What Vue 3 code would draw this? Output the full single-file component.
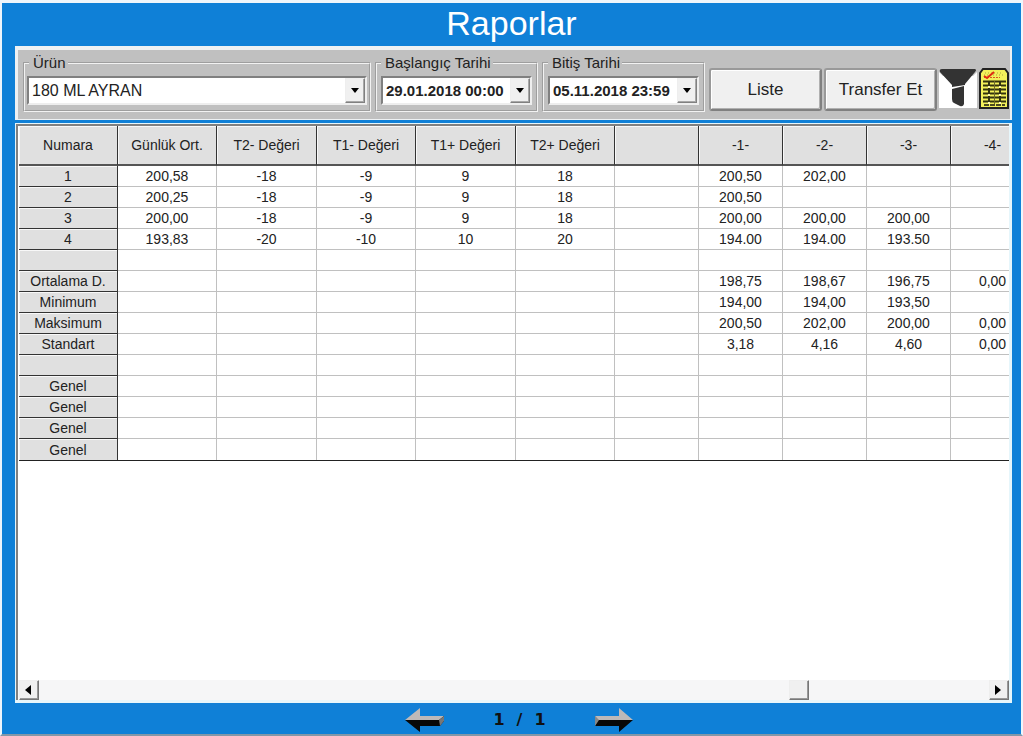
<script setup>
import { ref } from 'vue'

const product = ref('180 ML AYRAN')
const startDate = ref('29.01.2018 00:00')
const endDate = ref('05.11.2018 23:59')
const scroll = ref(751)

const columns = [
  'Numara', 'Günlük Ort.', 'T2- Değeri', 'T1- Değeri', 'T1+ Değeri', 'T2+ Değeri',
  '', '-1-', '-2-', '-3-', '-4-',
]

const rows = [
  ['1', '200,58', '-18', '-9', '9', '18', '', '200,50', '202,00', '', ''],
  ['2', '200,25', '-18', '-9', '9', '18', '', '200,50', '', '', ''],
  ['3', '200,00', '-18', '-9', '9', '18', '', '200,00', '200,00', '200,00', ''],
  ['4', '193,83', '-20', '-10', '10', '20', '', '194.00', '194.00', '193.50', ''],
  ['', '', '', '', '', '', '', '', '', '', ''],
  ['Ortalama D.', '', '', '', '', '', '', '198,75', '198,67', '196,75', '0,00'],
  ['Minimum', '', '', '', '', '', '', '194,00', '194,00', '193,50', ''],
  ['Maksimum', '', '', '', '', '', '', '200,50', '202,00', '200,00', '0,00'],
  ['Standart', '', '', '', '', '', '', '3,18', '4,16', '4,60', '0,00'],
  ['', '', '', '', '', '', '', '', '', '', ''],
  ['Genel', '', '', '', '', '', '', '', '', '', ''],
  ['Genel', '', '', '', '', '', '', '', '', '', ''],
  ['Genel', '', '', '', '', '', '', '', '', '', ''],
  ['Genel', '', '', '', '', '', '', '', '', '', ''],
]
</script>

<template>
  <main class="window">
    <h1 class="title">Raporlar</h1>

    <form class="toolbar" @submit.prevent>
      <fieldset class="group group-product">
        <legend><label for="product">Ürün</label></legend>
        <div class="combo combo-product">
          <select id="product" v-model="product">
            <option>180 ML AYRAN</option>
          </select>
          <span class="drop"></span>
        </div>
      </fieldset>
      <fieldset class="group group-date">
        <legend><label for="start">Başlangıç Tarihi</label></legend>
        <div class="combo combo-date">
          <select id="start" v-model="startDate">
            <option>29.01.2018 00:00</option>
          </select>
          <span class="drop"></span>
        </div>
      </fieldset>
      <fieldset class="group group-date">
        <legend><label for="end">Bitiş Tarihi</label></legend>
        <div class="combo combo-date">
          <select id="end" v-model="endDate">
            <option>05.11.2018 23:59</option>
          </select>
          <span class="drop"></span>
        </div>
      </fieldset>
      <div class="actions">
        <button type="button" class="push">Liste</button>
        <button type="button" class="push">Transfer Et</button>
        <button type="button" class="icon" aria-label="Filtre">
          <svg viewBox="0 0 38 40" width="38" height="40">
            <rect width="38" height="40" fill="#fff" />
            <path d="M0 0H38V4L34 8H4L0 4Z" fill="#c0c0c0" />
            <path d="M3 1H36Q38 2 36 4L26 16V17L13 19V17L1 4Q0 1 3 1Z" fill="#333" />
            <path d="M13 21 25 18V36Q24 39 21 38L15 35Q13 34 13 31Z" fill="#333" />
          </svg>
        </button>
        <button type="button" class="icon" aria-label="Tablo">
          <svg viewBox="0 0 30 41" width="30" height="41">
            <path d="M1 5 4 1H26L29 5V40H1Z" fill="#f3f05a" stroke="#222" stroke-width="2" />
            <path d="M6 5H24M5 7H25" stroke="#a8a440" stroke-dasharray="1 2" />
            <path d="M5 9.500H21" stroke="#d65a20" stroke-dasharray="2 1" />
            <path d="M5 8 8 10 15 4" fill="none" stroke="#e02b12" stroke-width="2" />
            <path d="M4 13.500H27M4 17.500H27M4 21.500H27M4 25.500H27M4 29.500H27M4 33.500H27" stroke="#33330f" stroke-width="2" />
            <path d="M5 37H26" stroke="#4b4920" stroke-width="2" stroke-dasharray="5 1" />
            <path d="M10 13V36M21 13V36" stroke="#33330f" stroke-width="2" />
            <path d="M15.500 13V36" stroke="#6d6a2c" />
            <path d="M10 18V36M21 18V36" stroke="#fff9b0" stroke-width="2" stroke-dasharray="2 6" />
          </svg>
        </button>
      </div>
    </form>

    <section class="panel">
      <div class="sheet">
        <table>
          <colgroup>
            <col v-for="(c, i) in columns" :key="i" :class="i < 6 ? (i === 2 || i === 4 ? 'col-l' : 'col-m') : 'col-s'" />
          </colgroup>
          <thead>
            <tr>
              <th v-for="(c, i) in columns" :key="i" scope="col">{{ c }}</th>
            </tr>
          </thead>
          <tbody>
            <tr v-for="(row, r) in rows" :key="r">
              <template v-for="(cell, i) in row" :key="i">
                <th v-if="i === 0" scope="row">{{ cell }}</th>
                <td v-else>{{ cell }}</td>
              </template>
            </tr>
          </tbody>
        </table>
      </div>
      <div class="scrollbar">
        <button type="button" class="step" aria-label="Sola kaydır">
          <svg viewBox="0 0 6 10" width="6" height="10"><path d="M6 0V10L0 5Z" /></svg>
        </button>
        <input v-model="scroll" type="range" min="0" max="931" aria-label="Yatay kaydırma" />
        <button type="button" class="step" aria-label="Sağa kaydır">
          <svg viewBox="0 0 6 10" width="6" height="10"><path d="M0 0V10L6 5Z" /></svg>
        </button>
      </div>
    </section>

    <nav class="pager">
      <button type="button" class="arrow" aria-label="Önceki sayfa">
        <svg viewBox="0 0 40 24" width="40" height="24">
          <path d="M0 12 15 0V8H39V12Z" fill="#bdb9b8" />
          <path d="M0 12H34L39 8V13L35 18H15V24Z" fill="#080808" />
          <path d="M34 12 39 8V13L35 18Z" fill="#777" />
        </svg>
      </button>
      <p class="pages"><span>1</span><span>/</span><span>1</span></p>
      <button type="button" class="arrow" aria-label="Sonraki sayfa">
        <svg viewBox="0 0 40 24" width="40" height="24">
          <path d="M1 8H25V0L39 12H4Z" fill="#bdb9b8" />
          <path d="M4 12H39L25 24V18H1Z" fill="#080808" />
          <path d="M1 8 5 12 1 18Z" fill="#888" />
        </svg>
      </button>
    </nav>
  </main>
</template>

<style>
body {
  margin: 0;
  background: #f4f8fb;
}
</style>

<style scoped>
* {
  box-sizing: border-box;
}

.window {
  display: flex;
  flex-direction: column;
  min-height: 100vh;
  padding: 0 9px 0 13px;
  border: solid #eef5fb;
  border-width: 3px 2px 0 2px;
  border-bottom: 2px solid #8297a8;
  background: #0f80d7;
  color: #222;
  font-family: "Liberation Sans", Arial, sans-serif;
}

button,
select {
  font-family: inherit;
  color: inherit;
}

.title {
  margin: 0;
  height: 43px;
  padding-right: 4px;
  color: #fff;
  font-size: 34px;
  font-weight: 400;
  line-height: 40px;
  text-align: center;
}

.toolbar {
  display: flex;
  gap: 4px;
  height: 74px;
  padding: 4px 1px 5px 5px;
  border: solid #eef1f3;
  border-width: 4px 2px 1px 3px;
  background: #c0c0c0;
}

.group {
  min-width: 0;
  height: 58px;
  margin: 0;
  padding: 0 4px;
  border: 2px groove #f2f2f2;
}

.group-product {
  flex: 1 1 0;
}

.group-date {
  flex: none;
  width: 163px;
}

.group legend {
  padding: 0 2px 0 4px;
  font-size: 15px;
  line-height: 18px;
}

.combo {
  position: relative;
  height: 29px;
  margin-top: 4px;
  border: 2px solid;
  border-color: #808080 #eee #eee #808080;
  background: #fff;
}

.combo-product {
  margin: 4px -2px 0;
}

.combo select {
  width: 100%;
  height: 100%;
  padding: 0 22px 0 3px;
  border: 0;
  appearance: none;
  background: transparent;
  font-size: 15px;
}

.combo-product select {
  font-size: 16px;
}

.combo-date select {
  font-weight: 700;
}

.drop {
  position: absolute;
  top: 0;
  right: 0;
  display: grid;
  place-items: center;
  width: 20px;
  height: 25px;
  border: 1px solid;
  border-color: #eee #808080 #808080 #eee;
  box-shadow: inset -1px -1px #a8a8a8;
  background: #f0f0f0;
  pointer-events: none;
}

.drop::after {
  content: "";
  border: 4px solid transparent;
  border-top: 5px solid #000;
  border-bottom: 0;
}

.actions {
  display: flex;
  align-items: flex-start;
  gap: 2px;
  padding-top: 14px;
}

.push {
  width: 113px;
  height: 43px;
  padding: 0;
  border: 2px solid;
  border-color: #999 #808080 #808080 #999;
  border-radius: 3px;
  box-shadow: inset 1px 1px #fff, inset -1px -1px #b0b0b0;
  background: #f0f0f0;
  font-size: 17px;
}

.icon {
  display: block;
  padding: 0;
  border: 0;
  background: none;
}

.icon svg {
  display: block;
}

.panel {
  display: flex;
  flex: 1;
  flex-direction: column;
  min-width: 0;
  margin-top: 3px;
  border: solid #e6f6fb;
  border-width: 1px 3px 3px 1px;
  background: #fff;
}

.sheet {
  flex: 1;
  overflow: hidden;
  border: solid #808080;
  border-width: 2px 0 0 2px;
  padding-left: 1px;
}

table {
  width: 1016px;
  table-layout: fixed;
  border-collapse: separate;
  border-spacing: 0;
  border-bottom: 1px solid #222;
  font-size: 14px;
}

.col-m {
  width: 99px;
}

.col-l {
  width: 100px;
}

.col-s {
  width: 84px;
}

th,
td {
  height: 21px;
  padding: 0;
  border: solid #c0c0c0;
  border-width: 0 1px 1px 0;
  font-weight: 400;
  line-height: 18px;
  text-align: center;
  white-space: nowrap;
}

th {
  border-color: #333;
  box-shadow: inset 1px 1px #f8f8f8;
  background: #e0e0e0;
}

thead th {
  height: 40px;
  border-bottom-width: 2px;
  border-bottom-color: #555;
}

tbody tr:last-child > * {
  border-bottom: 0;
}

.scrollbar {
  display: flex;
  height: 20px;
  padding-left: 1px;
  border-left: 2px solid #808080;
  background: #f6f6f7;
}

.step {
  display: grid;
  place-items: center;
  flex: none;
  width: 20px;
  height: 20px;
  padding: 0 2px 0 0;
  border: 1px solid;
  border-color: #eee #777 #777 #eee;
  box-shadow: inset -1px -1px #999;
  background: #f0f0f0;
}

input[type="range"] {
  flex: 1;
  min-width: 0;
  height: 20px;
  margin: 0;
  appearance: none;
  background: #f6f6f7;
}

input[type="range"]::-webkit-slider-thumb {
  width: 20px;
  height: 20px;
  appearance: none;
  border: 1px solid;
  border-color: #eee #777 #777 #eee;
  border-radius: 0;
  box-shadow: inset -1px -1px #999;
  background: #f0f0f0;
}

.pager {
  display: flex;
  align-items: center;
  justify-content: center;
  gap: 48px;
  height: 31px;
  padding: 2px 0 0 12px;
}

.arrow {
  padding: 0;
  border: 0;
  background: none;
}

.arrow svg {
  display: block;
}

.pages {
  display: flex;
  gap: 12px;
  margin: 0;
  color: #111;
  font-family: "DejaVu Sans", Verdana, sans-serif;
  font-size: 16px;
  font-weight: 700;
}
</style>
